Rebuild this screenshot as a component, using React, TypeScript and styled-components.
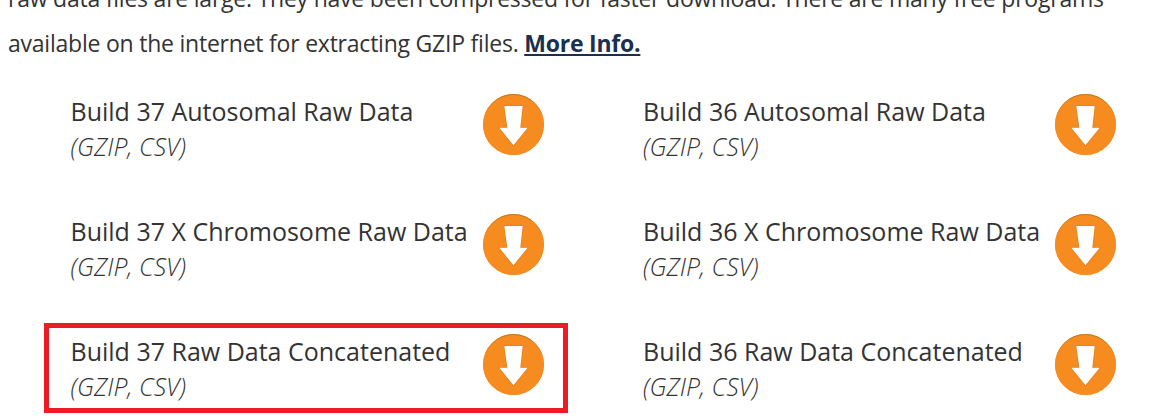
import React from "react";
import styled, { createGlobalStyle } from "styled-components";

const Global = createGlobalStyle`
  * { box-sizing: border-box; }
  body { margin: 0; background: #fff; overflow: hidden; font-family: "Open Sans", sans-serif; color: #333; }
`;
const Page = styled.main`
  height: 419px;
  overflow: hidden;
`;
const Intro = styled.p`
  margin: -24px 0 0 8px;
  font-size: 23px;
  letter-spacing: -0.225px;
  line-height: 45px;
  white-space: nowrap;
  color: #333;
`;
const InfoLink = styled.a`
  color: #1b2f4e;
  font-weight: 700;
  text-decoration: underline;
  text-decoration-thickness: 2px;
  text-underline-offset: 2px;
  text-decoration-skip-ink: none;
`;
const Grid = styled.div`
  display: grid;
  grid-template-columns: 524px 524px;
  column-gap: 48px;
  row-gap: 30px;
  margin: 17px 0 0 44px;
`;
const Item = styled.div<{ $marked?: boolean }>`
  display: flex;
  justify-content: space-between;
  height: 90px;
  padding: 6px 19px 0 21.5px;
  border: 5px solid ${(p) => (p.$marked ? "#ed1c24" : "transparent")};
  &:nth-child(even) {
    padding-left: 22px;
  }
`;
const Title = styled.div`
  font-size: 25px;
  line-height: 35px;
  white-space: nowrap;
`;
const Format = styled.div`
  font-size: 24.8px;
  line-height: 35px;
  font-style: italic;
  font-weight: 300;
`;
const Download = styled.svg`
  flex: none;
  width: 61px;
  height: 61px;
`;
const items = [
  "Build 37 Autosomal Raw Data",
  "Build 36 Autosomal Raw Data",
  "Build 37 X Chromosome Raw Data",
  "Build 36 X Chromosome Raw Data",
  "Build 37 Raw Data Concatenated",
  "Build 36 Raw Data Concatenated",
];

export default function App() {
  return (
    <Page>
      <Global />
      <Intro>
        raw data files are large. They have been compressed for faster download. There are many free programs
        <br />
        available on the internet for extracting GZIP files. <InfoLink>More Info.</InfoLink>
      </Intro>
      <Grid>
        {items.map((title, i) => (
          <Item key={title} $marked={i === 4}>
            <div>
              <Title>{title}</Title>
              <Format>(GZIP, CSV)</Format>
            </div>
            <Download viewBox="0 0 61 61">
              <defs>
                <linearGradient id={`rim${i}`} x1="0" y1="0" x2="0" y2="1">
                  <stop offset="0" stopColor="#cf7316" />
                  <stop offset="0.35" stopColor="#f68b1f" />
                </linearGradient>
              </defs>
              <circle cx="30.5" cy="30.5" r="30.5" fill="#f68b1f" />
              <circle cx="30.5" cy="30.5" r="30" fill="none" stroke={`url(#rim${i})`} />
              <path
                d="M21.3 12H39.7L37.3 33.7H44.7L30.4 51.3L16.3 33.7H24.3Z"
                fill="#fff"
                stroke="#df7d1b"
                strokeWidth="1.2"
                paintOrder="stroke"
              />
            </Download>
          </Item>
        ))}
      </Grid>
    </Page>
  );
}
